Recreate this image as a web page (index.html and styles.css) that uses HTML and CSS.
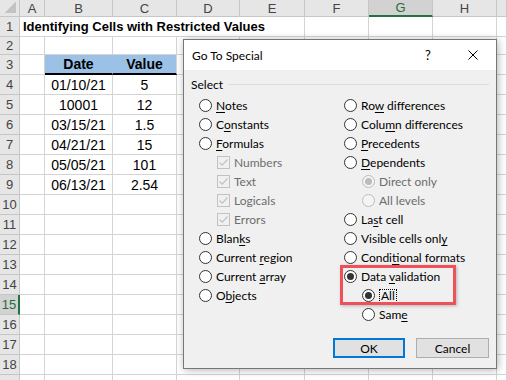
FILE: index.html
```html
<!DOCTYPE html>
<html lang="en">
<head>
    <meta charset="UTF-8">
    <title>Go To Special</title>
    <link rel="stylesheet" href="styles.css">
</head>
<body>

<div class="page">
    <div class="sheet">
        <div class="corner"></div>
        <div class="ch">A</div><div class="ch">B</div><div class="ch">C</div><div class="ch">D</div><div class="ch">E</div><div class="ch">F</div><div class="ch sel">G</div><div class="ch">H</div><div class="ch"></div>

        <div class="rh">1</div><div class="title">Identifying Cells with Restricted Values</div><div></div><div></div><div></div><div></div>
        <div class="rh">2</div><div></div><div></div><div></div><div></div><div></div><div></div><div></div><div></div><div></div>
        <div class="rh">3</div><div></div><div class="hd hd-first">Date</div><div class="hd">Value</div><div></div><div></div><div></div><div></div><div></div><div></div>
        <div class="rh">4</div><div></div><div>01/10/21</div><div>5</div><div></div><div></div><div></div><div></div><div></div><div></div>
        <div class="rh">5</div><div></div><div>10001</div><div>12</div><div></div><div></div><div></div><div></div><div></div><div></div>
        <div class="rh">6</div><div></div><div>03/15/21</div><div>1.5</div><div></div><div></div><div></div><div></div><div></div><div></div>
        <div class="rh">7</div><div></div><div>04/21/21</div><div>15</div><div></div><div></div><div></div><div></div><div></div><div></div>
        <div class="rh">8</div><div></div><div>05/05/21</div><div>101</div><div></div><div></div><div></div><div></div><div></div><div></div>
        <div class="rh">9</div><div></div><div>06/13/21</div><div>2.54</div><div></div><div></div><div></div><div></div><div></div><div></div>
        <div class="rh">10</div><div></div><div></div><div></div><div></div><div></div><div></div><div></div><div></div><div></div>
        <div class="rh">11</div><div></div><div></div><div></div><div></div><div></div><div></div><div></div><div></div><div></div>
        <div class="rh">12</div><div></div><div></div><div></div><div></div><div></div><div></div><div></div><div></div><div></div>
        <div class="rh">13</div><div></div><div></div><div></div><div></div><div></div><div></div><div></div><div></div><div></div>
        <div class="rh">14</div><div></div><div></div><div></div><div></div><div></div><div></div><div></div><div></div><div></div>
        <div class="rh sel">15</div><div></div><div></div><div></div><div></div><div></div><div></div><div></div><div></div><div></div>
        <div class="rh">16</div><div></div><div></div><div></div><div></div><div></div><div></div><div></div><div></div><div></div>
        <div class="rh">17</div><div></div><div></div><div></div><div></div><div></div><div></div><div></div><div></div><div></div>
        <div class="rh">18</div><div></div><div></div><div></div><div></div><div></div><div></div><div></div><div></div><div></div>
        <div class="rh"></div><div></div><div></div><div></div><div></div><div></div><div></div><div></div><div></div><div></div>
    </div>

    <div class="dialog">
        <div class="titlebar">
            <span class="dlg-title">Go To Special</span>
            <span class="help">?</span>
            <span class="close">
                <svg width="10" height="10" viewBox="0 0 10 10"><path d="M0.5 0.5 L9.5 9.5 M9.5 0.5 L0.5 9.5" stroke="#000" stroke-width="1" fill="none"/></svg>
            </span>
        </div>
        <div class="dlg-body">
            <div class="group-label"><span>Select</span><span class="group-line"></span></div>
            <div class="options">
                <div class="col">
                    <div class="opt"><span class="radio"></span><span><u>N</u>otes</span></div>
                    <div class="opt"><span class="radio"></span><span>C<u>o</u>nstants</span></div>
                    <div class="opt"><span class="radio"></span><span><u>F</u>ormulas</span></div>
                    <div class="opt sub disabled"><span class="check"><svg width="11" height="11" viewBox="0 0 11 11"><path d="M1.5 5.5 L4.2 8.2 L9.5 2.5" stroke="#c2c2c2" stroke-width="1.2" fill="none"/></svg></span><span>Numbers</span></div>
                    <div class="opt sub disabled"><span class="check"><svg width="11" height="11" viewBox="0 0 11 11"><path d="M1.5 5.5 L4.2 8.2 L9.5 2.5" stroke="#c2c2c2" stroke-width="1.2" fill="none"/></svg></span><span>Text</span></div>
                    <div class="opt sub disabled"><span class="check"><svg width="11" height="11" viewBox="0 0 11 11"><path d="M1.5 5.5 L4.2 8.2 L9.5 2.5" stroke="#c2c2c2" stroke-width="1.2" fill="none"/></svg></span><span>Logicals</span></div>
                    <div class="opt sub disabled"><span class="check"><svg width="11" height="11" viewBox="0 0 11 11"><path d="M1.5 5.5 L4.2 8.2 L9.5 2.5" stroke="#c2c2c2" stroke-width="1.2" fill="none"/></svg></span><span>Errors</span></div>
                    <div class="opt"><span class="radio"></span><span>Blan<u>k</u>s</span></div>
                    <div class="opt"><span class="radio"></span><span>Current <u>r</u>egion</span></div>
                    <div class="opt"><span class="radio"></span><span>Current <u>a</u>rray</span></div>
                    <div class="opt"><span class="radio"></span><span>O<u>b</u>jects</span></div>
                </div>
                <div class="col">
                    <div class="opt"><span class="radio"></span><span>Ro<u>w</u> differences</span></div>
                    <div class="opt"><span class="radio"></span><span>Colu<u>m</u>n differences</span></div>
                    <div class="opt"><span class="radio"></span><span><u>P</u>recedents</span></div>
                    <div class="opt"><span class="radio"></span><span><u>D</u>ependents</span></div>
                    <div class="opt sub disabled"><span class="radio on"></span><span>Direct only</span></div>
                    <div class="opt sub disabled"><span class="radio"></span><span>All levels</span></div>
                    <div class="opt"><span class="radio"></span><span>La<u>s</u>t cell</span></div>
                    <div class="opt"><span class="radio"></span><span>Visible cells onl<u>y</u></span></div>
                    <div class="opt"><span class="radio"></span><span>Condi<u>t</u>ional formats</span></div>
                    <div class="opt"><span class="radio on"></span><span>Data <u>v</u>alidation</span></div>
                    <div class="opt sub"><span class="radio on"></span><span class="focus">A<u>l</u>l</span></div>
                    <div class="opt sub"><span class="radio"></span><span>Sam<u>e</u></span></div>
                </div>
            </div>
            <div class="buttons">
                <button class="btn default">OK</button>
                <button class="btn">Cancel</button>
            </div>
        </div>
        <div class="highlight"></div>
    </div>
</div>

</body>
</html>
```

FILE: styles.css
```css
* {
    box-sizing: border-box;
}
body {
    margin: 0;
    background-color: #fff;
    font-family: "Liberation Sans", Arial, sans-serif;
}
.page {
    position: relative;
    width: 507px;
    height: 380px;
    overflow: hidden;
}

/* spreadsheet */
.sheet {
    display: grid;
    grid-template-columns: 20px 25px 68px 64px 63px 65px 64px 64px 64px 1fr;
    grid-template-rows: 17px 20px 18px repeat(17, 20px);
    font-size: 14px;
    color: #000;
}
.sheet > div {
    display: flex;
    align-items: center;
    justify-content: center;
    white-space: nowrap;
    border-right: 1px solid #d4d4d4;
    border-bottom: 1px solid #d4d4d4;
}
.sheet .ch,
.sheet .rh,
.sheet .corner {
    background-color: #e6e6e6;
    border-color: #c6c6c6;
    font-size: 13px;
    color: #444;
}
.sheet .corner {
    background: linear-gradient(to bottom right, transparent 50%, #c3c3c3 50%) no-repeat right 3px bottom 3px / 11px 11px, #e6e6e6;
}
.sheet .ch.sel {
    background-color: #d2d2d2;
    border-bottom: 2px solid #217346;
    color: #1e6b3c;
}
.sheet .rh.sel {
    background-color: #d2d2d2;
    border-right: 2px solid #217346;
    color: #1e6b3c;
}
.sheet .title {
    grid-column: span 5;
    justify-content: flex-start;
    padding-left: 3px;
    font-weight: bold;
    font-size: 13px;
}
.sheet .hd {
    background-color: #9bc2e6;
    font-weight: bold;
    border-bottom: 2px solid #000;
}
.sheet .hd-first {
    border-right-color: #9bc2e6;
}

/* dialog */
.dialog {
    position: absolute;
    left: 183px;
    top: 39px;
    width: 314px;
    height: 330px;
    border: 1px solid #777;
    background-color: #f0f0f0;
    box-shadow: 1px 1px 8px rgba(0,0,0,0.3);
    font-family: Lato, "Liberation Sans", sans-serif;
    font-size: 12px;
    color: #000;
}
.titlebar {
    height: 30px;
    background-color: #fff;
    display: flex;
    align-items: center;
}
.dlg-title {
    flex: 1;
    padding-left: 8px;
}
.help {
    width: 44px;
    text-align: center;
    font-size: 13px;
}
.close {
    width: 46px;
    display: flex;
    justify-content: center;
}
.dlg-body {
    padding: 7px 7px 0 7px;
}
.group-label {
    display: flex;
    align-items: center;
    gap: 5px;
    height: 14px;
}
.group-line {
    flex: 1;
    height: 1px;
    background-color: #dcdcdc;
}
.options {
    display: flex;
    margin: 5px 0 0 8px;
}
.options .col {
    width: 150px;
}
.opt {
    height: 19px;
    display: flex;
    align-items: center;
    gap: 4px;
    white-space: nowrap;
}
.opt.sub {
    padding-left: 18px;
}
.opt u {
    text-decoration-thickness: 1px;
    text-underline-offset: 2px;
}
.disabled {
    color: #6d6d6d;
}
.radio {
    width: 13px;
    height: 13px;
    flex: none;
    border: 1px solid #333;
    border-radius: 50%;
    background-color: #fff;
    display: flex;
    align-items: center;
    justify-content: center;
}
.radio.on::after {
    content: '';
    width: 7px;
    height: 7px;
    border-radius: 50%;
    background-color: #333;
}
.disabled .radio {
    border-color: #bcbcbc;
    background-color: #f4f4f4;
}
.disabled .radio.on::after {
    background-color: #bcbcbc;
}
.check {
    width: 13px;
    height: 13px;
    flex: none;
    border: 1px solid #c2c2c2;
    display: flex;
    align-items: center;
    justify-content: center;
}
.focus {
    border: 1px dotted #000;
    line-height: 12px;
    padding: 0 1px;
}
.buttons {
    display: flex;
    justify-content: flex-end;
    gap: 11px;
    margin-top: 14px;
}
.btn {
    width: 73px;
    height: 20px;
    padding: 0;
    background-color: #e1e1e1;
    border: 1px solid #adadad;
    font: inherit;
    color: #000;
}
.btn.default {
    width: 72px;
    border: 2px solid #0078d7;
}
.highlight {
    position: absolute;
    left: 156px;
    top: 225px;
    width: 116px;
    height: 40px;
    border: 3px solid #ee5159;
    box-shadow: 1px 1px 3px rgba(0,0,0,0.25);
}
```
